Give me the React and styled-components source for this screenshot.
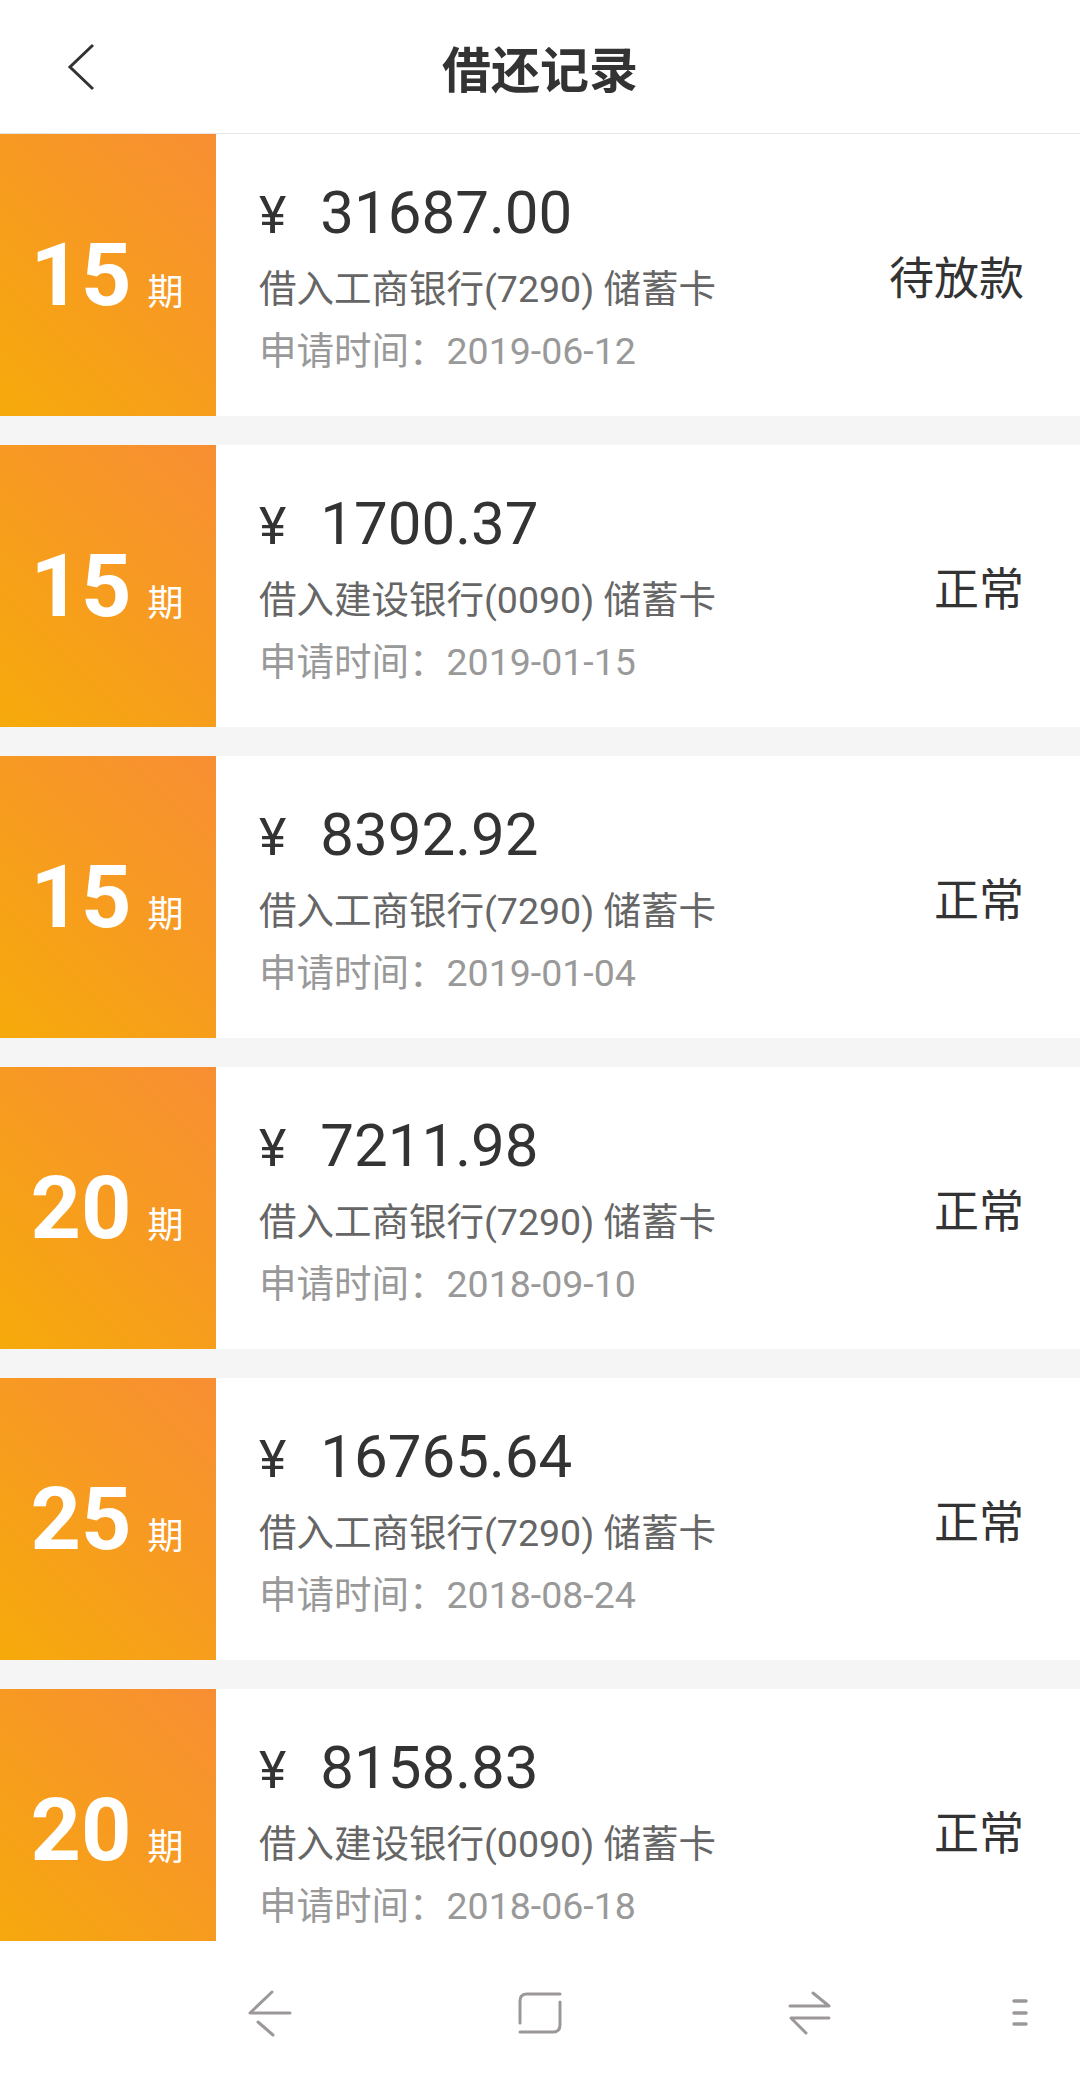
import React from 'react';
import styled, { createGlobalStyle } from 'styled-components';

const GlobalStyle = createGlobalStyle`
  html, body {
    margin: 0;
    padding: 0;
    background: #ffffff;
  }
  body {
    font-family: Roboto, "Noto Sans CJK SC", sans-serif;
  }
`;

const Page = styled.div`
  width: 1080px;
  height: 2084px;
  display: flex;
  flex-direction: column;
  background: #ffffff;
  overflow: hidden;
`;

const Header = styled.header`
  flex: 0 0 auto;
  height: 133px;
  border-bottom: 1px solid #e6e6e6;
  display: grid;
  grid-template-columns: 1fr auto 1fr;
  align-items: center;
`;

const BackButton = styled.button`
  justify-self: start;
  margin-left: 64px;
  padding: 0;
  border: none;
  background: none;
  display: flex;
`;

const Title = styled.h1`
  margin: 0;
  font-family: "Noto Sans CJK SC", sans-serif;
  font-size: 49px;
  font-weight: 700;
  color: #333333;
  line-height: 1;
`;

const List = styled.div`
  flex: 1 1 auto;
  overflow: hidden;
  background: #f5f5f5;
`;

const Card = styled.div`
  height: 282px;
  margin-bottom: 29px;
  display: flex;
  background: #ffffff;
`;

const Period = styled.div`
  flex: 0 0 216px;
  display: flex;
  align-items: center;
  justify-content: center;
  background: linear-gradient(45deg, #f6aa0a 0%, #f79a22 55%, #f88e33 100%);
  color: #ffffff;
`;

const PeriodInner = styled.div`
  display: flex;
  align-items: baseline;
  margin-left: -2px;
`;

const PeriodNum = styled.span`
  font-family: Roboto, sans-serif;
  font-size: 88px;
  font-weight: 700;
  line-height: 88px;
`;

const PeriodUnit = styled.span`
  margin-left: 16px;
  font-family: "Noto Sans CJK SC", sans-serif;
  font-size: 36px;
  line-height: 1;
`;

const Info = styled.div`
  flex: 1 1 auto;
  padding: 44px 0 0 43px;
  display: flex;
  flex-direction: column;
`;

const Amount = styled.div`
  font-size: 60px;
  line-height: 70px;
  color: #333333;
  white-space: nowrap;
`;

const Yen = styled.span`
  font-size: 52px;
  margin-right: 34px;
`;

const Line = styled.div`
  margin-top: ${p => p.$gap || 0}px;
  font-size: 37.5px;
  line-height: 62px;
  color: ${p => p.$color};
  white-space: nowrap;
`;

const Status = styled.div`
  align-self: center;
  padding-right: 56px;
  font-family: "Noto Sans CJK SC", sans-serif;
  font-size: 45px;
  line-height: 1;
  color: #333333;
`;

const NavBar = styled.nav`
  flex: 0 0 143px;
  display: flex;
  align-items: center;
  padding: 0 50px 0 135px;
  background: #ffffff;
`;

const NavSlot = styled.div`
  flex: ${p => (p.$end ? '1 1 auto' : '0 0 270px')};
  display: flex;
  justify-content: ${p => (p.$end ? 'flex-end' : 'center')};
`;

const navStroke = {
  fill: 'none',
  stroke: '#9c989a',
  strokeWidth: 3,
  strokeLinecap: 'round',
  strokeLinejoin: 'round',
};

const records = [
  { n: 15, amount: '31687.00', bank: '借入工商银行(7290) 储蓄卡', date: '2019-06-12', status: '待放款' },
  { n: 15, amount: '1700.37', bank: '借入建设银行(0090) 储蓄卡', date: '2019-01-15', status: '正常' },
  { n: 15, amount: '8392.92', bank: '借入工商银行(7290) 储蓄卡', date: '2019-01-04', status: '正常' },
  { n: 20, amount: '7211.98', bank: '借入工商银行(7290) 储蓄卡', date: '2018-09-10', status: '正常' },
  { n: 25, amount: '16765.64', bank: '借入工商银行(7290) 储蓄卡', date: '2018-08-24', status: '正常' },
  { n: 20, amount: '8158.83', bank: '借入建设银行(0090) 储蓄卡', date: '2018-06-18', status: '正常' },
];

const RecordCard = ({ item }) => (
  <Card>
    <Period>
      <PeriodInner>
        <PeriodNum>{item.n}</PeriodNum>
        <PeriodUnit>期</PeriodUnit>
      </PeriodInner>
    </Period>
    <Info>
      <Amount>
        <Yen>¥</Yen>
        {item.amount}
      </Amount>
      <Line $gap={7} $color="#666666">{item.bank}</Line>
      <Line $color="#999999">申请时间：{item.date}</Line>
    </Info>
    <Status>{item.status}</Status>
  </Card>
);

export default function App() {
  return (
    <Page>
      <GlobalStyle />
      <Header>
        <BackButton aria-label="返回">
          <svg width="34" height="56" viewBox="0 0 34 56">
            <polyline points="29,6 6,28 29,50" fill="none" stroke="#333" strokeWidth="3" />
          </svg>
        </BackButton>
        <Title>借还记录</Title>
        <div />
      </Header>
      <List>
        {records.map((item, i) => (
          <RecordCard key={i} item={item} />
        ))}
      </List>
      <NavBar>
        <NavSlot>
          <svg width="48" height="50" viewBox="0 0 48 50">
            <path d="M26 4 L4 25 H44 M12 34 L27 47" {...navStroke} />
          </svg>
        </NavSlot>
        <NavSlot>
          <svg width="48" height="48" viewBox="0 0 48 48">
            <path d="M44 5 H11 Q4 5 4 12 V34 M4 43 H37 Q44 43 44 36 V13" {...navStroke} />
          </svg>
        </NavSlot>
        <NavSlot>
          <svg width="48" height="48" viewBox="0 0 48 48">
            <path d="M4 17 H43 L27 4 M43 29 H5 L20 44" {...navStroke} />
          </svg>
        </NavSlot>
        <NavSlot $end>
          <svg width="20" height="32" viewBox="0 0 20 32">
            <path d="M4 4 H16 M4 16 H16 M4 27 H16" {...navStroke} strokeWidth="3.5" />
          </svg>
        </NavSlot>
      </NavBar>
    </Page>
  );
}
